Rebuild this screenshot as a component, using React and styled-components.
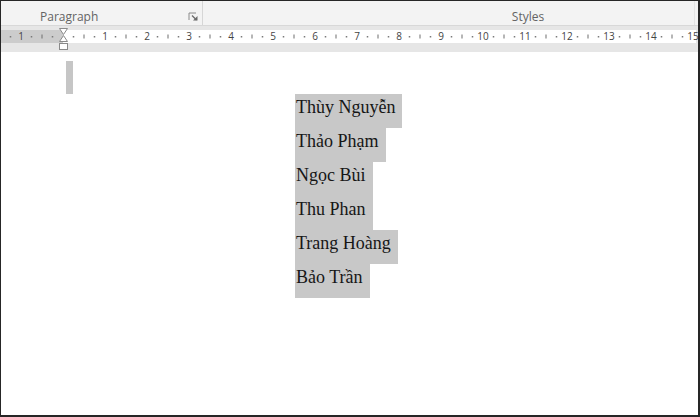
import React from 'react'
import styled, { createGlobalStyle } from 'styled-components'

const GlobalStyle = createGlobalStyle`
  html, body {
    margin: 0;
    padding: 0;
    background: #ffffff;
  }
`

const names = ['Thùy Nguyễn', 'Thảo Phạm', 'Ngọc Bùi', 'Thu Phan', 'Trang Hoàng', 'Bảo Trần']

// ruler: zero point at x=63, 42px per unit
const ZERO = 63
const UNIT = 42

function Ruler() {
  const marks = []
  for (let q = -6; q <= 61; q++) {
    const x = ZERO + (q * UNIT) / 4
    if (x < 2 || x > 697) continue
    const n = q / 4
    if (q % 4 === 0) {
      if (n === 0) continue
      marks.push(
        <text key={q} x={x} y={40} textAnchor="middle" fontSize="10" fill="#444444"
          fontFamily="'Open Sans', 'Noto Sans', sans-serif">
          {Math.abs(n)}
        </text>
      )
    } else if (q % 2 === 0) {
      marks.push(<rect key={q} x={x - 0.5} y={34.5} width={1} height={4} fill="#6e6e6e" />)
    } else {
      marks.push(<rect key={q} x={x - 0.75} y={36} width={1.5} height={1.5} fill="#7a7a7a" />)
    }
  }

  return (
    <RulerSvg width="697" height="26" viewBox="1 26 697 26">
      <rect x="1" y="26" width="697" height="26" fill="#e6e6e6" />
      <rect x="1" y="30" width="62" height="13" fill="#cccccc" />
      <rect x="63" y="30" width="633" height="13" fill="#ffffff" />
      {marks}
      {/* indent markers */}
      <path d="M59.5 28.5 H67.5 L63.5 34.5 Z" fill="#ffffff" stroke="#8a8a8a" strokeWidth="1" />
      <path d="M63.5 35.5 L67.5 41.5 H59.5 Z" fill="#ffffff" stroke="#8a8a8a" strokeWidth="1" />
      <rect x="59.5" y="43.5" width="8" height="6" fill="#ffffff" stroke="#8a8a8a" strokeWidth="1" />
    </RulerSvg>
  )
}

function LauncherIcon() {
  return (
    <svg width="11" height="9" viewBox="0 0 11 9">
      <path d="M1 8 V1 H8" fill="none" stroke="#8a8a8a" strokeWidth="1" />
      <path d="M4 3.5 L8.5 8" fill="none" stroke="#6a6a6a" strokeWidth="1.2" />
      <path d="M5 8.5 H9.5 V4 Z" fill="#6a6a6a" />
    </svg>
  )
}

export default function App() {
  return (
    <>
      <GlobalStyle />
      <Frame>
        <GroupBar>
          <Group $width={203} $pad={39} $divider>
            <GroupLabel>Paragraph</GroupLabel>
            <Launcher><LauncherIcon /></Launcher>
          </Group>
          <Group $pad={159} $center>
            <GroupLabel>Styles</GroupLabel>
          </Group>
        </GroupBar>
        <Ruler />
        <Page>
          <MarkBar />
          <NameList>
            {names.map((name) => (
              <NameLine key={name}>{name}</NameLine>
            ))}
          </NameList>
        </Page>
      </Frame>
    </>
  )
}

const Frame = styled.div`
  width: 700px;
  height: 417px;
  box-sizing: border-box;
  border-style: solid;
  border-color: #262626;
  border-width: 1px 2px 2px 1px;
  display: flex;
  flex-direction: column;
  overflow: hidden;
  background: #ffffff;
`

const GroupBar = styled.div`
  height: 24px;
  flex-shrink: 0;
  display: flex;
  background: #f3f3f3;
  border-bottom: 1px solid #d8d8d8;
`

const Group = styled.div`
  position: relative;
  box-sizing: border-box;
  ${(p) => (p.$width ? `width: ${p.$width - 1}px;` : 'flex: 1;')}
  padding-left: ${(p) => p.$pad}px;
  display: flex;
  align-items: center;
  justify-content: ${(p) => (p.$center ? 'center' : 'flex-start')};
  border-right: 1px solid ${(p) => (p.$divider ? '#d6d6d6' : '#e4e4e4')};
  margin-right: ${(p) => (p.$divider ? '0' : '3px')};
`

const GroupLabel = styled.span`
  font-family: 'Open Sans', 'Noto Sans', sans-serif;
  font-size: 12px;
  color: #646464;
  padding-top: 7px;
`

const Launcher = styled.span`
  position: absolute;
  left: 187px;
  top: 11px;
  display: flex;
`

const RulerSvg = styled.svg`
  display: block;
  flex-shrink: 0;
`

const Page = styled.div`
  flex: 1;
  background: #ffffff;
`

const MarkBar = styled.div`
  width: 7px;
  height: 33px;
  margin: 9px 0 0 65px;
  background: #c6c6c6;
`

const NameList = styled.div`
  margin-left: 294px;
  display: flex;
  flex-direction: column;
  align-items: flex-start;
`

const NameLine = styled.div`
  font-family: 'Liberation Serif', 'Times New Roman', serif;
  font-size: 18px;
  line-height: 20px;
  color: #161616;
  background: #c8c8c8;
  padding: 3px 7px 11px 1px;
`
